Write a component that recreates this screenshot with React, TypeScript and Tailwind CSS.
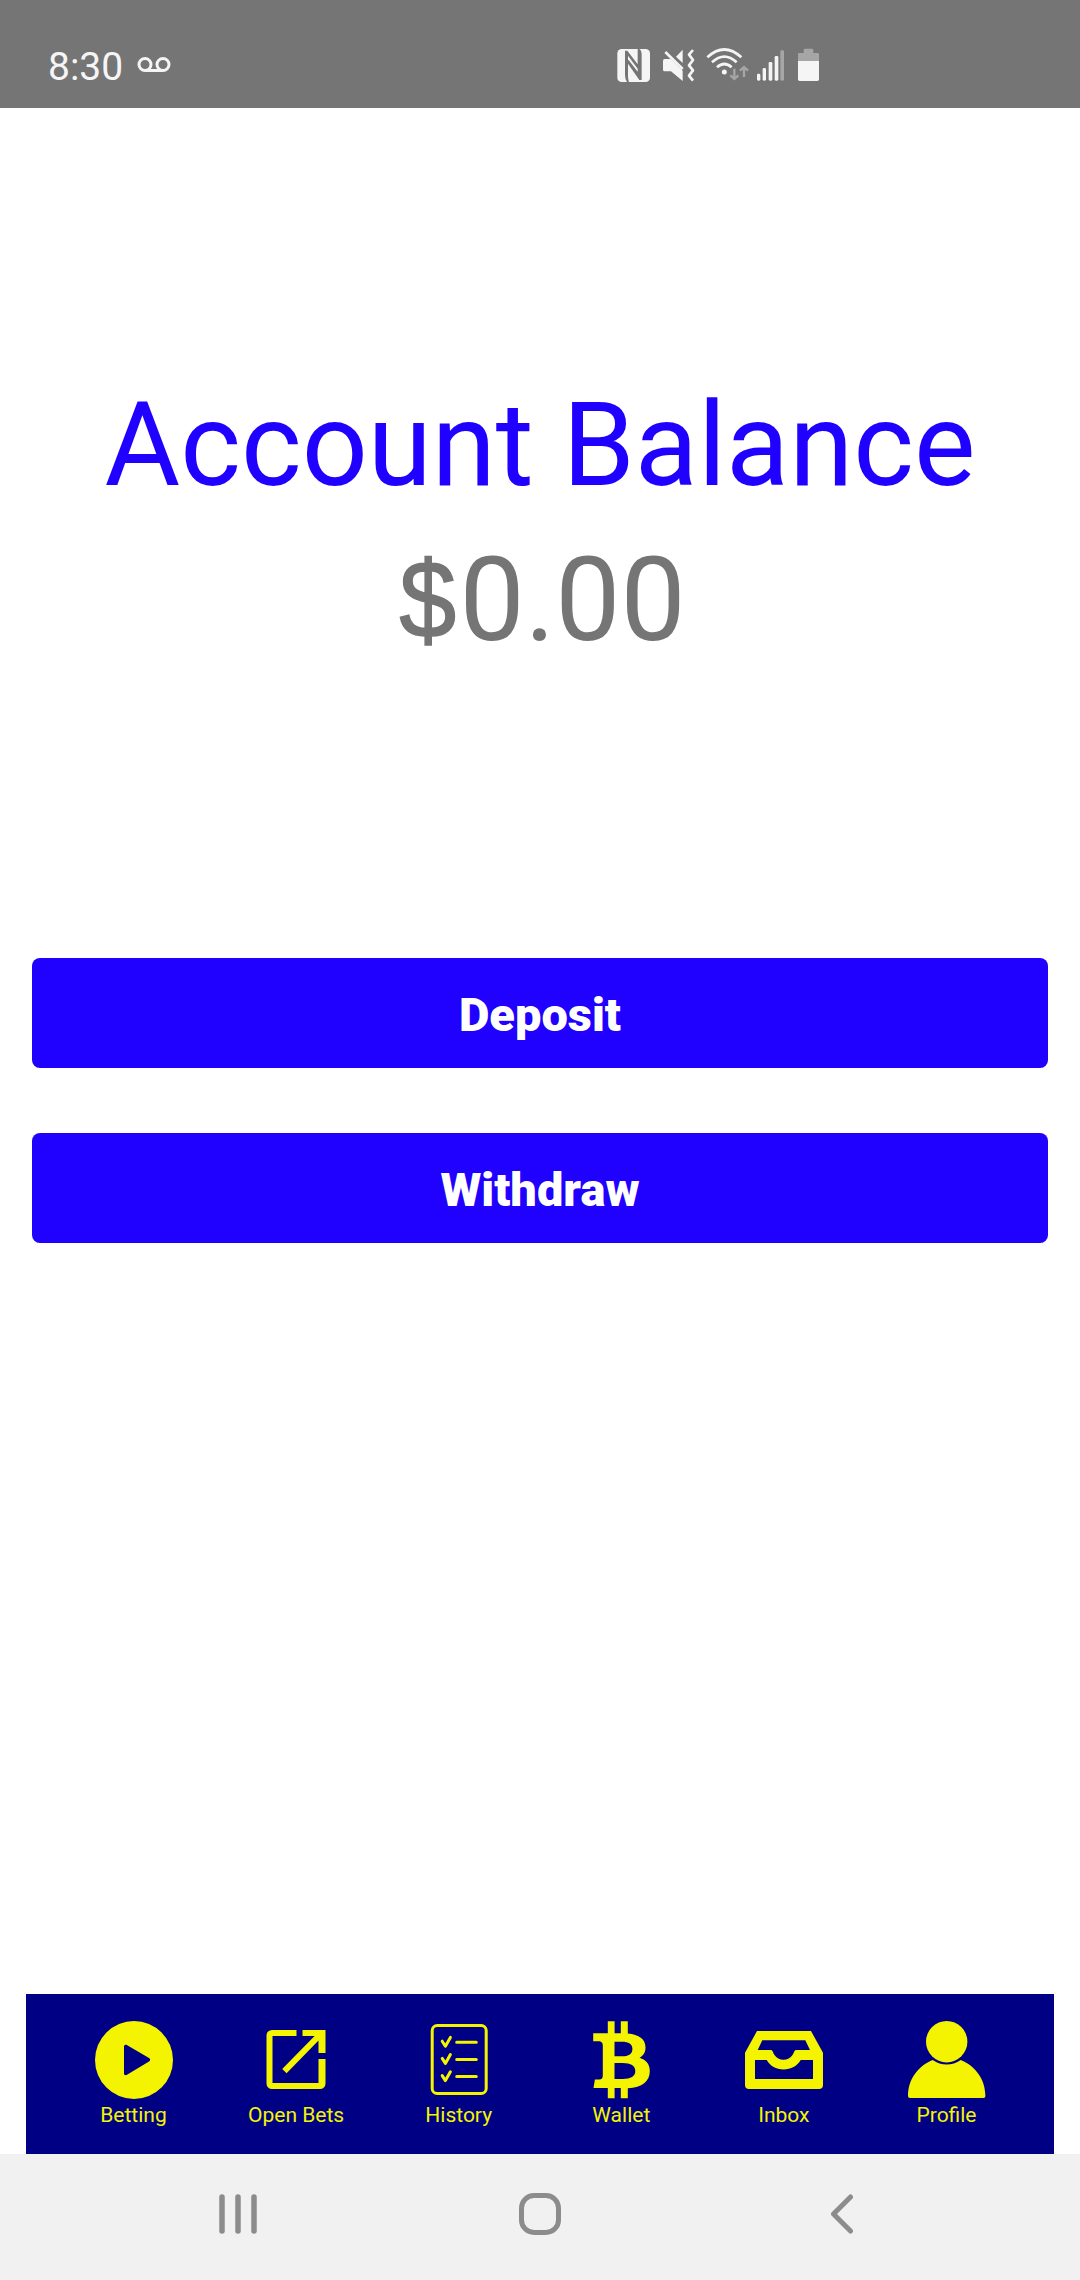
import type { ReactNode } from 'react';

interface Tab {
  title: string;
  icon: ReactNode;
}

const tabs: Tab[] = [
  {
    title: 'Betting',
    icon: (
      <path
        fillRule="evenodd"
        d="M39 0a39 39 0 1 0 0 78a39 39 0 1 0 0-78ZM29 25.4c0-1.5 1.5-2.2 2.8-1.5l22.2 13.2c1.5.9 1.5 2.6 0 3.5L32 53.8c-1.5.9-3 .2-3-1.3Z"
      />
    ),
  },
  {
    title: 'Open Bets',
    icon: (
      <>
        <path d="M39.5 9H15a5.5 5.5 0 0 0-5.5 5.5v48A5.5 5.5 0 0 0 15 68h48a5.5 5.5 0 0 0 5.5-5.5V38h-7v24h-46V15h24Z" />
        <path d="M45.5 9h23v23h-7V19.5L29.6 52.3l-4.4-4.2L57.6 15H45.5Z" />
      </>
    ),
  },
  {
    title: 'History',
    icon: (
      <g fill="none" stroke="currentColor" strokeWidth="3" strokeLinecap="round" strokeLinejoin="round">
        <rect x="12.2" y="4.5" width="54" height="68" rx="5" />
        <path d="M22.2 20.2l3.2 5l5-8.8M22.2 37.4l3.2 5l5-8.8M22.2 54.6l3.2 5l5-8.8" />
        <path d="M36.7 21.3h19.6M36.7 38.4h19.6M36.7 55.6h19.6" />
      </g>
    ),
  },
  {
    title: 'Wallet',
    icon: (
      <path
        fillRule="evenodd"
        d="M25.8.3h6.8v12h6.2V.3h7v12.2C57 13.5 63.5 18 63.5 26.5c0 5-2.3 8.5-6 10.2c7 2 10.3 7 10.3 13.3c0 10.5-7.5 16.5-22 17.2v10h-7V67h-6.2v10.2h-6.8V67H11.5l1.4-8.6h4.4c2.5 0 3.5-1.2 3.5-4V25c0-3.2-1.2-4.7-4.5-4.7h-5.1v-8h14.6ZM32.5 20.7v14.6h7.3c7 0 10.6-2.5 10.6-7.4s-3.6-7.2-10.6-7.2ZM32.5 42v16h8c8.5 0 12.8-2.5 12.8-7.9S49 42 40.5 42Z"
      />
    ),
  },
  {
    title: 'Inbox',
    icon: (
      <path
        fillRule="evenodd"
        d="M12 10h54l12 21.7V64a4 4 0 0 1-4 4H4a4 4 0 0 1-4-4V31.7ZM17.3 19.3L12.7 29h13c2.2 0 2 2.5 3.8 5c2 2.8 5.2 4.8 9 4.8s7-2 9-4.8c1.8-2.5 1.6-5 3.8-5H65l-4.7-9.7ZM10 39v19h58V39H55.7c-3.6 6-9.6 9.5-17.2 9.5S25.3 45 21.7 39Z"
      />
    ),
  },
  {
    title: 'Profile',
    icon: (
      <g transform="translate(.7)">
        <circle cx="39" cy="20.7" r="20.7" />
        <path d="M25 39C9.5 45.5.3 59 .3 75q0 2 2 2h73.4q2 0 2-2C77.7 59 68.5 45.5 53 39Q46.5 43.6 39 43.6T25 39Z" />
      </g>
    ),
  },
];

function StatusBar() {
  return (
    <header className="flex h-[108px] bg-[#757575] text-[#f5f5f5]">
      <div className="flex w-[617px] items-start pl-12">
        <span className="mt-11 text-[39px] leading-[46px]">8:30</span>
        <svg className="mt-[57px] ml-[14px]" width="34" height="17" viewBox="0 0 34 17" fill="none" stroke="currentColor" strokeWidth="3">
          <circle cx="8" cy="7.5" r="6" />
          <circle cx="26" cy="7.5" r="6" />
          <path d="M8 13.5h18" />
        </svg>
      </div>

      <div className="flex pt-12">
        {/* NFC */}
        <svg width="33" height="34" viewBox="51 54 99 102" fill="currentColor">
          <rect x="52" y="57" width="98" height="99" rx="13" />
          <path fill="#757575" d="M75 62h7L113 103V57h5q7 4 7 18v75h-7L84 101v38q0 10 3 17h-6q-6-8-6-20Z" />
          <path d="M84 77L113 116v9L84 88Z" />
        </svg>
        {/* Muted with vibration */}
        <svg className="ml-[13px]" width="33" height="34" viewBox="189 54 99 102" fill="currentColor">
          <path d="M194 87h18L248 122v31L213 124h-19q-5 0-5-5V92q0-5 5-5ZM248 59v40L228 80Z" />
          <path fill="none" stroke="currentColor" strokeWidth="8" d="M196 66L248 117" />
          <path fill="none" stroke="currentColor" strokeWidth="8" strokeLinejoin="round" d="M279 60L267 74L279 90L267 106L279 121L267 137L279 152" />
        </svg>
        {/* Wifi */}
        <svg className="ml-[10px]" width="43" height="34" viewBox="318 54 129 102" fill="none" stroke="currentColor" strokeWidth="8">
          <path d="M322 82Q373 35 424 82M336 97Q373 63 410 97M351 112Q373 92 395 112" />
          <circle cx="373" cy="126" r="7.5" fill="currentColor" stroke="none" />
          <path stroke="#a6a6a6" strokeWidth="7" d="M403 116V147M391 136L403 147L415 136M432 141V111M420 122L432 111L444 122" />
        </svg>
        {/* Cell signal */}
        <svg className="ml-[7px]" width="29" height="34" viewBox="468 54 87 102" fill="currentColor">
          <rect x="471" y="131" width="10" height="21" rx="4" />
          <rect x="488" y="114" width="10" height="38" rx="4" />
          <rect x="506" y="96" width="11" height="56" rx="4" />
          <rect x="524" y="78" width="11" height="74" rx="4" />
          <rect x="541" y="61" width="11" height="91" rx="4" fill="#a6a6a6" />
        </svg>
        {/* Battery */}
        <svg className="ml-[13px]" width="21" height="34" viewBox="594 54 63 102" fill="currentColor">
          <path fill="#a6a6a6" d="M615 56h21q4 0 4 4v9h13q4 0 4 4v21h-63V73q0-4 4-4h13v-9q0-4 4-4Z" />
          <path d="M594 93h63v55q0 5-5 5h-53q-5 0-5-5Z" />
        </svg>
      </div>
    </header>
  );
}

function TabBar() {
  return (
    <nav className="mx-[26px] flex h-40 justify-center bg-[#000084] text-[#f4f400]">
      {tabs.map((tab) => (
        <a key={tab.title} className="flex w-[162.6px] flex-col items-center pt-[27px]">
          <svg width="78" height="78" viewBox="0 0 78 78" fill="currentColor" overflow="visible">
            {tab.icon}
          </svg>
          <span className="mt-1 text-[21px] leading-[25px] whitespace-nowrap">{tab.title}</span>
        </a>
      ))}
    </nav>
  );
}

function SystemNav() {
  return (
    <footer className="flex h-[126px] items-center bg-[#f1f1f1] pb-[6px] pl-[219px] text-[#8c8c8c]">
      <svg width="38" height="42" viewBox="0 0 38 42" fill="none" stroke="currentColor" strokeWidth="5.5" strokeLinecap="round">
        <path d="M3 4v34M19 4v34M35 4v34" />
      </svg>
      <svg className="ml-[262px]" width="42" height="42" viewBox="0 0 42 42" fill="none" stroke="currentColor" strokeWidth="5">
        <rect x="2.5" y="2.5" width="37" height="37" rx="12.5" />
      </svg>
      <svg className="ml-[269px]" width="24" height="42" viewBox="0 0 24 42" fill="none" stroke="currentColor" strokeWidth="5" strokeLinecap="round" strokeLinejoin="round">
        <path d="M20.5 4L3.5 21L20.5 38" />
      </svg>
    </footer>
  );
}

export default function App() {
  return (
    <div className="flex h-[2280px] w-[1080px] flex-col bg-white font-['Roboto',sans-serif]">
      <StatusBar />
      <main className="flex flex-1 flex-col px-8">
        <div className="pt-[260px] text-center text-[116px] leading-[154px]">
          <h1 className="text-[#2000ff]">Account Balance</h1>
          <p className="pt-px text-[#757575]">
            <span className="mr-px ml-[3px] inline-block scale-x-[.93] align-[2px] font-['Liberation_Sans',sans-serif] text-[110px] leading-none [-webkit-text-stroke:1.5px_#757575]">$</span>0.00
          </p>
        </div>
        <div className="mt-[281px] flex flex-col gap-[65px]">
          <button className="h-[110px] rounded-lg bg-[#2000ff] pt-[3px] text-[47px] leading-[55px] font-black text-white">Deposit</button>
          <button className="h-[110px] rounded-lg bg-[#2000ff] pt-[3px] text-[47px] leading-[55px] font-black text-white">Withdraw</button>
        </div>
      </main>
      <TabBar />
      <SystemNav />
    </div>
  );
}
